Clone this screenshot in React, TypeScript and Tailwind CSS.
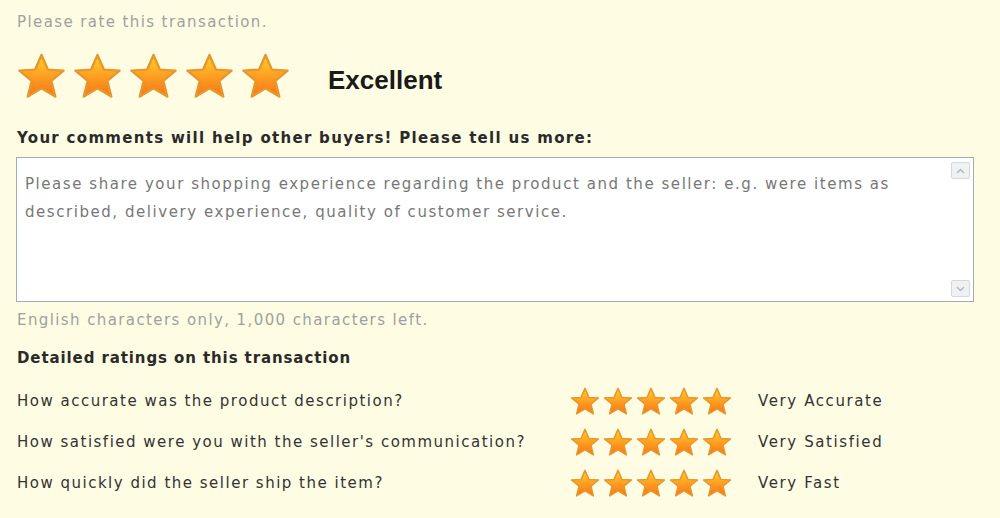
import React from 'react'

function Star({ size, id }: { size: number; id: string }) {
  return (
    <svg width={size} height={size} viewBox="0 0 100 96" className="shrink-0">
      <defs>
        <linearGradient id={id} x1="0" y1="0" x2="0" y2="1">
          <stop offset="0" stopColor="#ffd426" />
          <stop offset="0.45" stopColor="#ffa522" />
          <stop offset="1" stopColor="#f47418" />
        </linearGradient>
      </defs>
      <polygon
        points="50,6 63,36 95,38 70,59 78,91 50,74 22,91 30,59 5,38 37,36"
        fill={`url(#${id})`}
        stroke="#e8962e"
        strokeWidth="5"
        strokeLinejoin="round"
      />
    </svg>
  )
}

const rows = [
  { q: 'How accurate was the product description?', a: 'Very Accurate' },
  { q: "How satisfied were you with the seller's communication?", a: 'Very Satisfied' },
  { q: 'How quickly did the seller ship the item?', a: 'Very Fast' },
]

export default function App() {
  return (
    <div
      className="w-[1000px] h-[518px] overflow-hidden bg-[#fefde4] pl-[17px] pt-[10px]"
      style={{ fontFamily: '"DejaVu Sans", Verdana, sans-serif' }}
    >
      <div className="text-[15px] leading-[24px] tracking-[1.4px] text-[#a0a0a0]">Please rate this transaction.</div>

      <div className="flex items-center mt-[16px] h-[50px]">
        <div className="flex gap-[7px]">
          {[0, 1, 2, 3, 4].map((i) => (
            <Star key={i} size={49} id={`big${i}`} />
          ))}
        </div>
        <div
          className="ml-[38px] mt-[10px] text-[26px] font-bold text-[#1a1a1a]"
          style={{ fontFamily: '"Liberation Sans", Arial, sans-serif' }}
        >
          Excellent
        </div>
      </div>

      <div className="mt-[26px] text-[15px] leading-[24px] font-bold tracking-[1.3px] text-[#2a2a2a]">
        Your comments will help other buyers! Please tell us more:
      </div>

      <div className="mt-[7px] w-[958px] h-[145px] -ml-[1px] border border-[#a3abb6] bg-white flex">
        <div className="flex-1 pl-[8px] pt-[12px] pr-[4px] text-[15px] leading-[28px] tracking-[1.55px] text-[#777] whitespace-nowrap">
          Please share your shopping experience regarding the product and the seller: e.g. were items as
          <br />
          described, delivery experience, quality of customer service.
        </div>
        <div className="w-[22px] flex flex-col justify-between py-[4px] pr-[3px]">
          <div className="h-[17px] border border-[#d4d7dc] bg-[#f0f1f3] rounded-[2px] flex items-center justify-center">
            <svg width="9" height="6" viewBox="0 0 9 6">
              <path d="M1 5 L4.5 1.5 L8 5" stroke="#b5b9bf" strokeWidth="1.5" fill="none" />
            </svg>
          </div>
          <div className="h-[17px] border border-[#d4d7dc] bg-[#f0f1f3] rounded-[2px] flex items-center justify-center">
            <svg width="9" height="6" viewBox="0 0 9 6">
              <path d="M1 1 L4.5 4.5 L8 1" stroke="#b5b9bf" strokeWidth="1.5" fill="none" />
            </svg>
          </div>
        </div>
      </div>

      <div className="mt-[6px] text-[15px] leading-[24px] tracking-[1.4px] text-[#a0a0a0]">
        English characters only, 1,000 characters left.
      </div>

      <div className="mt-[14px] text-[15px] leading-[24px] font-bold tracking-[0.9px] text-[#2a2a2a]">
        Detailed ratings on this transaction
      </div>

      <div className="mt-[15px] flex flex-col gap-[9px]">
        {rows.map((r, ri) => (
          <div key={ri} className="flex items-center h-[32px]">
            <div className="w-[553px] text-[15px] tracking-[1.5px] text-[#333]">{r.q}</div>
            <div className="flex gap-[3px]">
              {[0, 1, 2, 3, 4].map((i) => (
                <Star key={i} size={30} id={`s${ri}${i}`} />
              ))}
            </div>
            <div className="ml-[26px] text-[15px] tracking-[1.6px] text-[#333]">{r.a}</div>
          </div>
        ))}
      </div>
    </div>
  )
}
